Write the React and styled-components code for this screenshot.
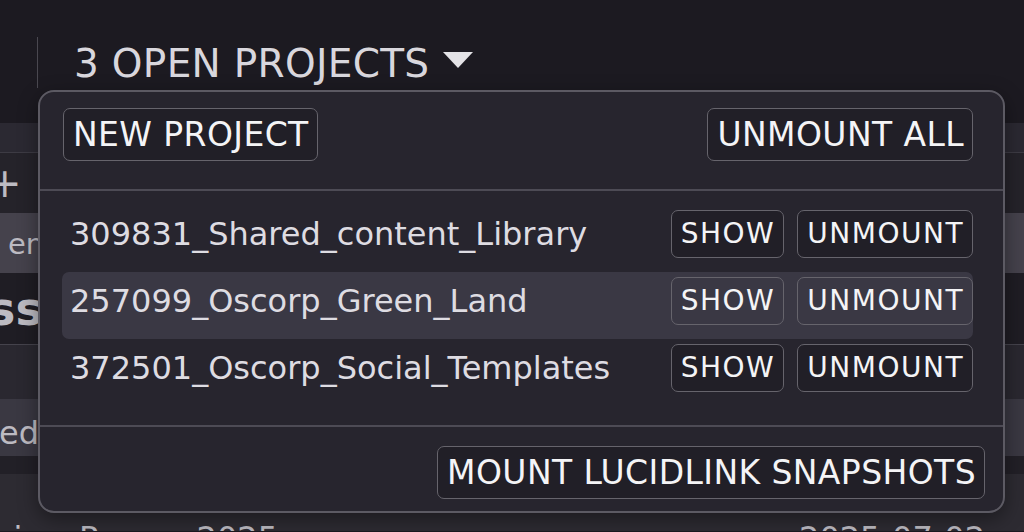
import React from "react";
import styled, { createGlobalStyle } from "styled-components";

const FONT = `"DejaVu Sans", "Noto Sans", sans-serif`;

const Global = createGlobalStyle`
  html, body { margin: 0; padding: 0; }
  body {
    background: #1c1a21;
    width: 1024px;
    height: 532px;
    overflow: hidden;
    font-family: ${FONT};
  }
  * { box-sizing: border-box; }
`;

const Page = styled.div`
  position: relative;
  width: 1024px;
  height: 532px;
  overflow: hidden;
  background: #1c1a21;
`;

const TopBar = styled.header`
  height: 123px;
  display: flex;
  align-items: flex-start;
  background: #1c1a21;
`;

const VDivider = styled.div`
  width: 1px;
  height: 51px;
  margin: 37px 0 0 37px;
  background: #4a4850;
`;

const Title = styled.button`
  margin: 44px 0 0 36px;
  padding: 0;
  border: 0;
  background: none;
  display: flex;
  align-items: center;
  gap: 14px;
  font-family: ${FONT};
  font-size: 39px;
  line-height: 40px;
  color: #d9d7dd;
  letter-spacing: 0.3px;
`;

const Caret = styled.svg`
  width: 30px;
  height: 16px;
  margin-top: -8px;
  flex: none;
`;

const Toolbar = styled.div`
  height: 30px;
  background: #2b2932;
  border-bottom: 1px solid #3d3b44;
`;

const BgRow = styled.div`
  height: ${(p) => p.$h}px;
  background: ${(p) => p.$bg};
  border-bottom: ${(p) => (p.$line ? "1px solid #45434c" : "none")};
  display: flex;
  align-items: ${(p) => p.$align || "center"};
  justify-content: space-between;
  overflow: hidden;
  color: #bdbbc2;
  font-family: ${FONT};
  font-size: ${(p) => p.$fs || 30}px;
  font-weight: ${(p) => p.$fw || 400};
  white-space: nowrap;
`;

const BgText = styled.span`
  margin-left: ${(p) => p.$ml}px;
  margin-right: ${(p) => p.$mr || 0}px;
  margin-bottom: ${(p) => p.$mb || 0}px;
  margin-top: ${(p) => p.$mt || 0}px;
`;

const Dropdown = styled.div`
  position: absolute;
  left: 38px;
  top: 90px;
  width: 967px;
  height: 423px;
  background: #27252e;
  border: 2px solid #5c5a63;
  border-radius: 16px;
  display: flex;
  flex-direction: column;
  font-family: ${FONT};
  box-shadow: 0 6px 20px rgba(0, 0, 0, 0.4);
`;

const TopSection = styled.div`
  height: 99px;
  padding: 16px 30px 0 23px;
  display: flex;
  justify-content: space-between;
  align-items: flex-start;
  border-bottom: 2px solid #4d4b55;
`;

const ListSection = styled.div`
  height: 236px;
  padding: 14px 30px 0 22px;
  display: flex;
  flex-direction: column;
  border-bottom: 2px solid #4d4b55;
`;

const BottomSection = styled.div`
  flex: 1;
  padding: 19px 18px 0 0;
  display: flex;
  justify-content: flex-end;
  align-items: flex-start;
`;

const Btn = styled.button`
  height: ${(p) => (p.$small ? 48 : 53)}px;
  padding: 0 8px 0 9px;
  border: 1.5px solid #66646c;
  border-radius: 7px;
  background: ${(p) => (p.$onHi ? "#3a3844" : "#211f27")};
  color: #f4f4f6;
  font-family: ${FONT};
  font-size: ${(p) => (p.$small ? 28 : 33)}px;
  letter-spacing: ${(p) => (p.$small ? 1.5 : 0.4)}px;
  line-height: 1;
  white-space: nowrap;
  display: flex;
  align-items: center;
`;

const Row = styled.div`
  height: 67px;
  padding: 5px 0 0 8px;
  display: flex;
  align-items: flex-start;
  border-radius: 7px;
  background: ${(p) => (p.$hi ? "#3a3844" : "transparent")};
`;

const Name = styled.div`
  flex: 1;
  line-height: 48px;
  font-size: 32px;
  color: #dedce2;
  white-space: nowrap;
`;

const Actions = styled.div`
  display: flex;
  gap: 13px;
`;

const projects = [
  "309831_Shared_content_Library",
  "257099_Oscorp_Green_Land",
  "372501_Oscorp_Social_Templates",
];

export default function App() {
  return (
    <>
      <Global />
      <Page>
        <TopBar>
          <VDivider />
          <Title>
            3 OPEN PROJECTS
            <Caret viewBox="0 0 30 16">
              <polygon points="0,0 30,0 15,16" fill="#e4e3e7" />
            </Caret>
          </Title>
        </TopBar>
        <Toolbar />
        <BgRow $h={60} $bg="#25232a" $fs={40}>
          <BgText $ml={-12}>+</BgText>
        </BgRow>
        <BgRow $h={60} $bg="#45424c" $fs={29}>
          <BgText $ml={8} $mt={2}>en</BgText>
        </BgRow>
        <BgRow $h={72} $bg="#1f1d24" $fs={46} $fw={700} $line>
          <BgText $ml={-12}>ss</BgText>
        </BgRow>
        <BgRow $h={54} $bg="#2a2830" />
        <BgRow $h={57} $bg="#3a3842" $fs={32}>
          <BgText $ml={-1} $mt={10}>ed</BgText>
        </BgRow>
        <BgRow $h={18} $bg="#222027" />
        <BgRow $h={57} $bg="#2d2b32" $align="flex-end" $fs={32}>
          <BgText $ml={-6} $mb={-26}>aign_Promo_2025</BgText>
          <BgText $ml={0} $mr={39} $mb={-26}>2025-07-02</BgText>
        </BgRow>

        <Dropdown>
          <TopSection>
            <Btn>NEW PROJECT</Btn>
            <Btn>UNMOUNT ALL</Btn>
          </TopSection>
          <ListSection>
            {projects.map((p, i) => (
              <Row key={p} $hi={i === 1}>
                <Name>{p}</Name>
                <Actions>
                  <Btn $small $onHi={i === 1}>SHOW</Btn>
                  <Btn $small $onHi={i === 1}>UNMOUNT</Btn>
                </Actions>
              </Row>
            ))}
          </ListSection>
          <BottomSection>
            <Btn>MOUNT LUCIDLINK SNAPSHOTS</Btn>
          </BottomSection>
        </Dropdown>
      </Page>
    </>
  );
}
